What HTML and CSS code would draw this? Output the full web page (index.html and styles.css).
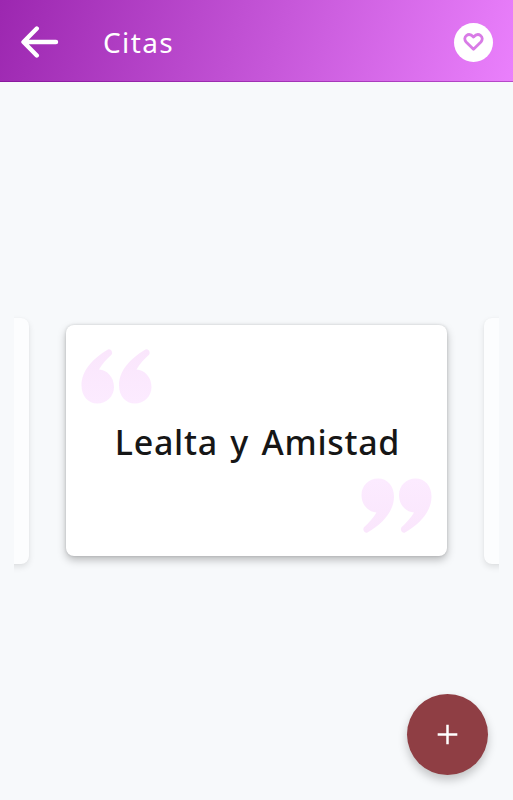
FILE: index.html
```html
<!DOCTYPE html>
<html lang="es">
<head>
  <meta charset="UTF-8">
  <title>Citas</title>
  <link rel="stylesheet" href="styles.css">
</head>
<body>
  <header class="toolbar">
    <a class="back" href="#">
      <svg width="38" height="32" viewBox="0 0 38 32">
        <path d="M15.8 2.5L2.5 16L15.8 29.5M3 16H35" />
      </svg>
    </a>
    <h1>Citas</h1>
    <button class="favorite">
      <svg width="22" height="20" viewBox="0 0 22 20">
        <path d="M10.5 17.3L3.1 10C-1 5 5.5 -0.5 10.5 5C15.5 -0.5 22 5 17.9 10Z" />
      </svg>
    </button>
  </header>

  <main>
    <div class="slider">
      <div class="card side"></div>
      <div class="card active">
        <svg class="quote" width="72" height="55" viewBox="0 0 72 55">
          <defs>
            <linearGradient id="pink" x1="0" y1="0" x2="0" y2="1">
              <stop offset="0" stop-color="#fae6fc" />
              <stop offset="1" stop-color="#fcebff" />
            </linearGradient>
          </defs>
          <g fill="url(#pink)">
            <path d="M27 .5C29.5 -.5 32.5 3 30.5 5.8C26 10 21 15 18 20.5C26 21 33 28 33 38C33 47.5 25.5 54.5 16.5 54.5C7 54.5 .5 47 .5 36.5C.5 22 11.5 9.5 27 .5Z" />
            <path d="M64.5 .5C67 -.5 70 3 68 5.8C63.5 10 58.5 15 55.5 20.5C63.5 21 70.5 28 70.5 38C70.5 47.5 63 54.5 54 54.5C44.5 54.5 38 47 38 36.5C38 22 49 9.5 64.5 .5Z" />
          </g>
        </svg>
        <p>Lealta y Amistad</p>
        <svg class="quote close" width="72" height="55" viewBox="0 0 72 55">
          <g fill="url(#pink)">
            <path d="M27 .5C29.5 -.5 32.5 3 30.5 5.8C26 10 21 15 18 20.5C26 21 33 28 33 38C33 47.5 25.5 54.5 16.5 54.5C7 54.5 .5 47 .5 36.5C.5 22 11.5 9.5 27 .5Z" />
            <path d="M64.5 .5C67 -.5 70 3 68 5.8C63.5 10 58.5 15 55.5 20.5C63.5 21 70.5 28 70.5 38C70.5 47.5 63 54.5 54 54.5C44.5 54.5 38 47 38 36.5C38 22 49 9.5 64.5 .5Z" />
          </g>
        </svg>
      </div>
      <div class="card side"></div>
    </div>
  </main>

  <button class="add">
    <svg width="21" height="21" viewBox="0 0 22 22">
      <path d="M11 .7V21.3M.7 11H21.3" />
    </svg>
  </button>
</body>
</html>
```
FILE: styles.css
```css
* {
  box-sizing: border-box;
}
body {
  margin: 0;
  height: 800px;
  overflow: hidden;
  display: flex;
  flex-direction: column;
  background-color: #f7f9fb;
  font-family: "Noto Sans", sans-serif;
}
.toolbar {
  display: flex;
  align-items: center;
  height: 82px;
  padding: 3px 20px 0 21px;
  background: linear-gradient(107deg, #9c27b0, #ea80fc);
  border-bottom: 1px solid rgba(110, 0, 130, 0.4);
}
.back {
  display: flex;
  width: 82px;
}
.back path {
  fill: none;
  stroke: #fff;
  stroke-width: 4.4;
  stroke-linecap: round;
  stroke-linejoin: round;
}
h1 {
  flex: 1;
  margin: 0;
  color: #fff;
  font-size: 28px;
  font-weight: 400;
  line-height: 36px;
  letter-spacing: 1.4px;
}
button {
  display: flex;
  align-items: center;
  justify-content: center;
  padding: 0;
  border: 0;
  border-radius: 50%;
}
.favorite {
  width: 39px;
  height: 39px;
  background-color: #fff;
}
.favorite path {
  fill: none;
  stroke: #d87be6;
  stroke-width: 2.8;
  stroke-linejoin: round;
}
main {
  flex: 1;
  padding: 220px 14px 0;
}
.slider {
  display: flex;
  justify-content: center;
  align-items: center;
  gap: 37px;
  height: 277px;
  overflow: hidden;
}
.card {
  flex: none;
  width: 381px;
  border-radius: 8px;
}
.side {
  height: 246px;
  background-color: #fcfdfe;
  box-shadow: 0 3px 6px rgba(0, 0, 0, 0.1), 0 0 2px rgba(0, 0, 0, 0.04);
}
/* current quote */
.active {
  display: flex;
  flex-direction: column;
  justify-content: space-between;
  height: 231px;
  padding: 24px 15px 23px;
  background-color: #fff;
  box-shadow: 0 4px 8px rgba(0, 0, 0, 0.25), 0 0 3px rgba(0, 0, 0, 0.15);
}
.active p {
  margin: 0;
  padding: 1px 0 0 2px;
  color: #161616;
  font-size: 34px;
  font-weight: 500;
  line-height: 40px;
  letter-spacing: 0.7px;
  word-spacing: 3px;
  text-align: center;
  white-space: nowrap;
}
.close {
  align-self: flex-end;
  transform: rotate(180deg);
}
.add {
  position: absolute;
  left: 407px;
  top: 694px;
  width: 81px;
  height: 81px;
  background-color: #8f3e44;
  box-shadow: 0 5px 10px rgba(0, 0, 0, 0.22);
}
.add path {
  stroke: #fff;
  stroke-width: 2.6;
}
```
